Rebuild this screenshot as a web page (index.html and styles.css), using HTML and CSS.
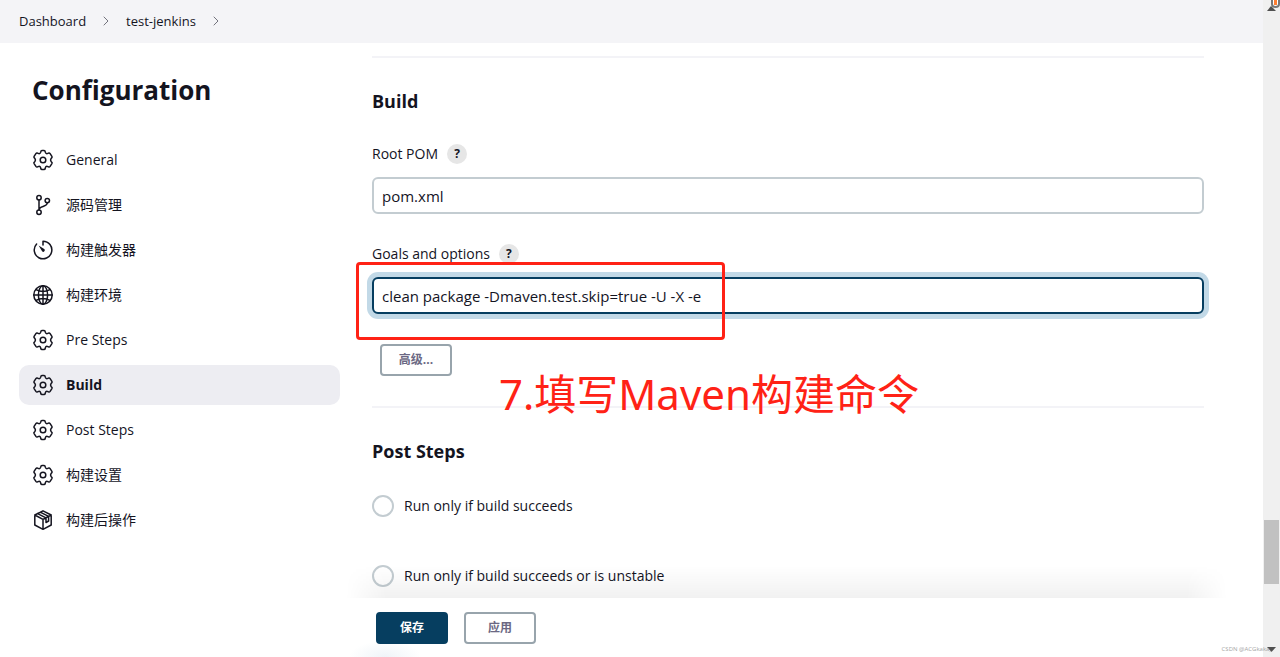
FILE: index.html
```html
<!DOCTYPE html>
<html lang="zh-CN">
<head>
<meta charset="utf-8">
<title>test-jenkins Config</title>
<link rel="stylesheet" href="styles.css">
</head>
<body>
<svg class="sprite" aria-hidden="true">
  <symbol id="gear" viewBox="0 0 24 24"><path d="M9.8 3.5Q10 2.4 11 2.4H13Q14 2.4 14.2 3.5L14.4 4.4Q14.8 5.9 16.3 5.6L17.6 5.1Q18.6 4.9 19.1 5.6L20.9 8.4Q21.4 9.3 20.7 9.9L20.1 10.5Q19 12 20.1 13.5L20.7 14.1Q21.4 14.7 20.9 15.6L19.1 18.4Q18.6 19.1 17.6 18.9L16.3 18.4Q14.8 18.1 14.4 19.6L14.2 20.5Q14 21.6 13 21.6H11Q10 21.6 9.8 20.5L9.6 19.6Q9.2 18.1 7.7 18.4L6.4 18.9Q5.4 19.1 4.9 18.4L3.1 15.6Q2.6 14.7 3.3 14.1L3.9 13.5Q5 12 3.9 10.5L3.3 9.9Q2.6 9.3 3.1 8.4L4.9 5.6Q5.4 4.9 6.4 5.1L7.7 5.6Q9.2 5.9 9.6 4.4Z"/><circle cx="12" cy="12" r="2.8"/></symbol>
  <symbol id="branch" viewBox="0 0 24 24"><circle cx="8" cy="4.8" r="2.2"/><circle cx="8" cy="19.2" r="2.2"/><circle cx="16.3" cy="7.6" r="2.2"/><path d="M8 7V17M16.3 9.8C16.3 14.5 8 12.5 8 17"/></symbol>
  <symbol id="timer" viewBox="0 0 24 24"><path d="M12 7V3.2A8.8 8.8 0 1 1 5.6 6"/><path class="solid" d="M7.6 7.4L13.2 11.1A1.5 1.5 0 1 1 11.1 13.2Z"/></symbol>
  <symbol id="globe" viewBox="0 0 24 24"><circle cx="12" cy="12" r="9.2"/><ellipse cx="12" cy="12" rx="4.6" ry="9.2"/><path d="M12 2.8V21.2M2.8 12H21.2M5 6.6Q12 10.4 19 6.6M5 17.4Q12 13.6 19 17.4"/></symbol>
  <symbol id="package" viewBox="0 0 24 24"><path d="M12 2.8L20.2 7V17L12 21.3L3.8 17V7ZM3.8 7L12 11.4L20.2 7M12 11.4V21.3M6.6 5.6L15 9.8V14.5L17.6 13V8.4L9.2 4.2"/></symbol>
  <symbol id="chevron" viewBox="0 0 10 10"><path d="M3 1L7 5L3 9"/></symbol>
</svg>
<div class="window">
  <div class="page">
    <header class="crumbs">
      <a href="#">Dashboard</a><svg class="chevron"><use href="#chevron"/></svg>
      <a href="#">test-jenkins</a><svg class="chevron"><use href="#chevron"/></svg>
    </header>
    <div class="columns">
      <aside class="side">
        <h1>Configuration</h1>
        <nav>
          <a href="#"><svg><use href="#gear"/></svg>General</a>
          <a href="#"><svg><use href="#branch"/></svg>源码管理</a>
          <a href="#"><svg><use href="#timer"/></svg>构建触发器</a>
          <a href="#"><svg><use href="#globe"/></svg>构建环境</a>
          <a href="#"><svg><use href="#gear"/></svg>Pre Steps</a>
          <a href="#" class="active"><svg><use href="#gear"/></svg>Build</a>
          <a href="#"><svg><use href="#gear"/></svg>Post Steps</a>
          <a href="#"><svg><use href="#gear"/></svg>构建设置</a>
          <a href="#"><svg><use href="#package"/></svg>构建后操作</a>
        </nav>
      </aside>
      <main class="main">
        <form class="form">
          <section class="section">
            <h2>Build</h2>
            <div class="field">
              <div class="label-row"><label for="pom">Root POM</label><button type="button" class="help">?</button></div>
              <input id="pom" type="text" value="pom.xml">
            </div>
            <div class="field">
              <div class="label-row"><label for="goals">Goals and options</label><button type="button" class="help">?</button></div>
              <input id="goals" class="focused" type="text" value="clean package -Dmaven.test.skip=true -U -X -e">
              <div class="mark-box"></div>
            </div>
            <button type="button" class="btn advanced">高级...</button>
            <div class="mark-text">7.填写Maven构建命令</div>
          </section>
          <section class="section">
            <h2>Post Steps</h2>
            <div class="choices">
              <label class="choice"><input type="radio" name="post">Run only if build succeeds</label>
              <label class="choice"><input type="radio" name="post">Run only if build succeeds or is unstable</label>
            </div>
          </section>
        </form>
        <footer class="bar">
          <button type="button" class="btn primary">保存</button>
          <button type="button" class="btn">应用</button>
        </footer>
      </main>
    </div>
  </div>
  <div class="scroll">
    <svg class="cursor" viewBox="0 0 17 12"><path class="arrow" d="M4 11L8 6L13 11Z"/><path class="cap" d="M9 0V4Q9 7 12.500 7Q16 7 16 4V0"/><path class="tip" d="M11 0H14V5H11Z"/></svg>
    <div class="thumb"></div>
    <svg class="down" viewBox="0 0 17 12"><path class="arrow" d="M4 2H13L8.500 7Z"/></svg>
  </div>
  <div class="watermark">CSDN @ACGkaka_</div>
</div>
</body>
</html>
```
FILE: styles.css
```css
* { box-sizing: border-box; }
body {
  margin: 0;
  background: #fff;
  color: #14141f;
  font: 14px/20px "Open Sans", "Noto Sans CJK SC", sans-serif;
}
a { color: inherit; text-decoration: none; }
button, input { font: inherit; color: inherit; margin: 0; }
svg { fill: none; stroke: currentColor; stroke-linecap: round; stroke-linejoin: round; flex: none; }
h1, h2 { margin: 0; font-weight: 700; }
.sprite { position: absolute; width: 0; height: 0; }
.solid { fill: currentColor; stroke: none; }

.window { position: relative; display: grid; grid-template-columns: 1fr 17px; height: 100vh; overflow: hidden; }
.page { display: flex; flex-direction: column; min-width: 0; min-height: 0; }
.crumbs { display: flex; align-items: center; height: 43px; flex: none; padding: 0 19px 2px; background: #f4f4f7; font-size: 13px; }
.chevron { width: 10px; height: 10px; margin: 0 15px; color: #73737d; }

.columns { flex: 1; min-height: 0; display: grid; grid-template-columns: 340px 1fr; }
.side { padding: 29px 0 0 19px; }
.side h1 { padding-left: 13px; font-size: 26px; line-height: 36px; }
nav { display: flex; flex-direction: column; gap: 5px; margin-top: 32px; }
nav a { display: flex; align-items: center; gap: 11px; height: 40px; padding-left: 12px; border-radius: 10px; }
nav svg { width: 24px; height: 24px; stroke-width: 1.5; }
nav .active { background: #ededf2; font-weight: 700; }

.main { display: flex; flex-direction: column; min-height: 0; min-width: 0; }
.form { flex: 1; min-height: 0; overflow: hidden; padding: 13px 59px 0 32px; }
.section { position: relative; border-top: 2px solid #f3f3f7; padding: 30px 0; }
.section h2 { font-size: 18px; line-height: 26px; margin-bottom: 30px; }
.field { position: relative; margin-bottom: 30px; }
.label-row { display: flex; align-items: center; gap: 9px; height: 20px; margin-bottom: 13px; }
.help { width: 20px; height: 20px; padding: 0; border: 0; border-radius: 50%; background: #e6e6e6; font-size: 12px; line-height: 20px; font-weight: 700; }
input[type="text"] { display: block; width: 100%; height: 37px; padding: 0 8px; border: 2px solid #c3ccd1; border-radius: 6px; background: #fff; font-size: 15px; outline: none; }
input.focused { border-color: #063e60; box-shadow: 0 0 0 5px #c2d9e7; }
.mark-box { position: absolute; left: -16px; top: 18px; width: 369px; height: 78px; border: 3px solid #ff2216; border-radius: 4px; }
.mark-text { position: absolute; z-index: 1; left: 127px; bottom: -18px; color: #ff2216; font: 42px/60px "Noto Sans", "Noto Sans CJK SC", sans-serif; white-space: nowrap; }

.btn { width: 72px; height: 32px; padding: 0; border: 2px solid #98a4ac; border-radius: 4px; background: #fff; color: #6b6883; font-size: 12px; line-height: 18px; font-weight: 700; }
.btn.primary { border-color: #063e60; background: #063e60; color: #fff; }
.advanced { display: block; margin-left: 8px; }
.choices { display: flex; flex-direction: column; gap: 48px; padding-top: 1px; }
.choice { display: flex; align-items: center; gap: 10px; height: 22px; }
input[type="radio"] { appearance: none; width: 22px; height: 22px; border: 2px solid #c3ccd1; border-radius: 50%; background: #fff; }

.bar { position: relative; flex: none; display: flex; gap: 16px; padding: 14px 36px 13px; background: radial-gradient(ellipse 36px 16px at 45px 100%, #eff4f8, transparent), #fff; }
.bar::before {
  content: "";
  position: absolute;
  left: 6px;
  right: 36px;
  bottom: 100%;
  height: 32px;
  background: linear-gradient(transparent, rgba(0, 0, 0, 0.055));
  mask-image: linear-gradient(90deg, transparent, #000 40px, #000 calc(100% - 40px), transparent);
}

.scroll { display: flex; flex-direction: column; background: #f0f0f0; }
.scroll svg { width: 17px; height: 12px; }
.thumb { width: 15px; height: 64px; margin: auto 1px 61px; background: #c1c1c1; }
.arrow { fill: #505050; stroke: none; }
.cap { fill: #fff; stroke: #777; stroke-width: 2; }
.tip { fill: #ff7f32; stroke: none; }
.watermark { position: absolute; right: 8px; bottom: 3px; color: #a5a5a5; font: 6px/10px "Open Sans", sans-serif; }
```
